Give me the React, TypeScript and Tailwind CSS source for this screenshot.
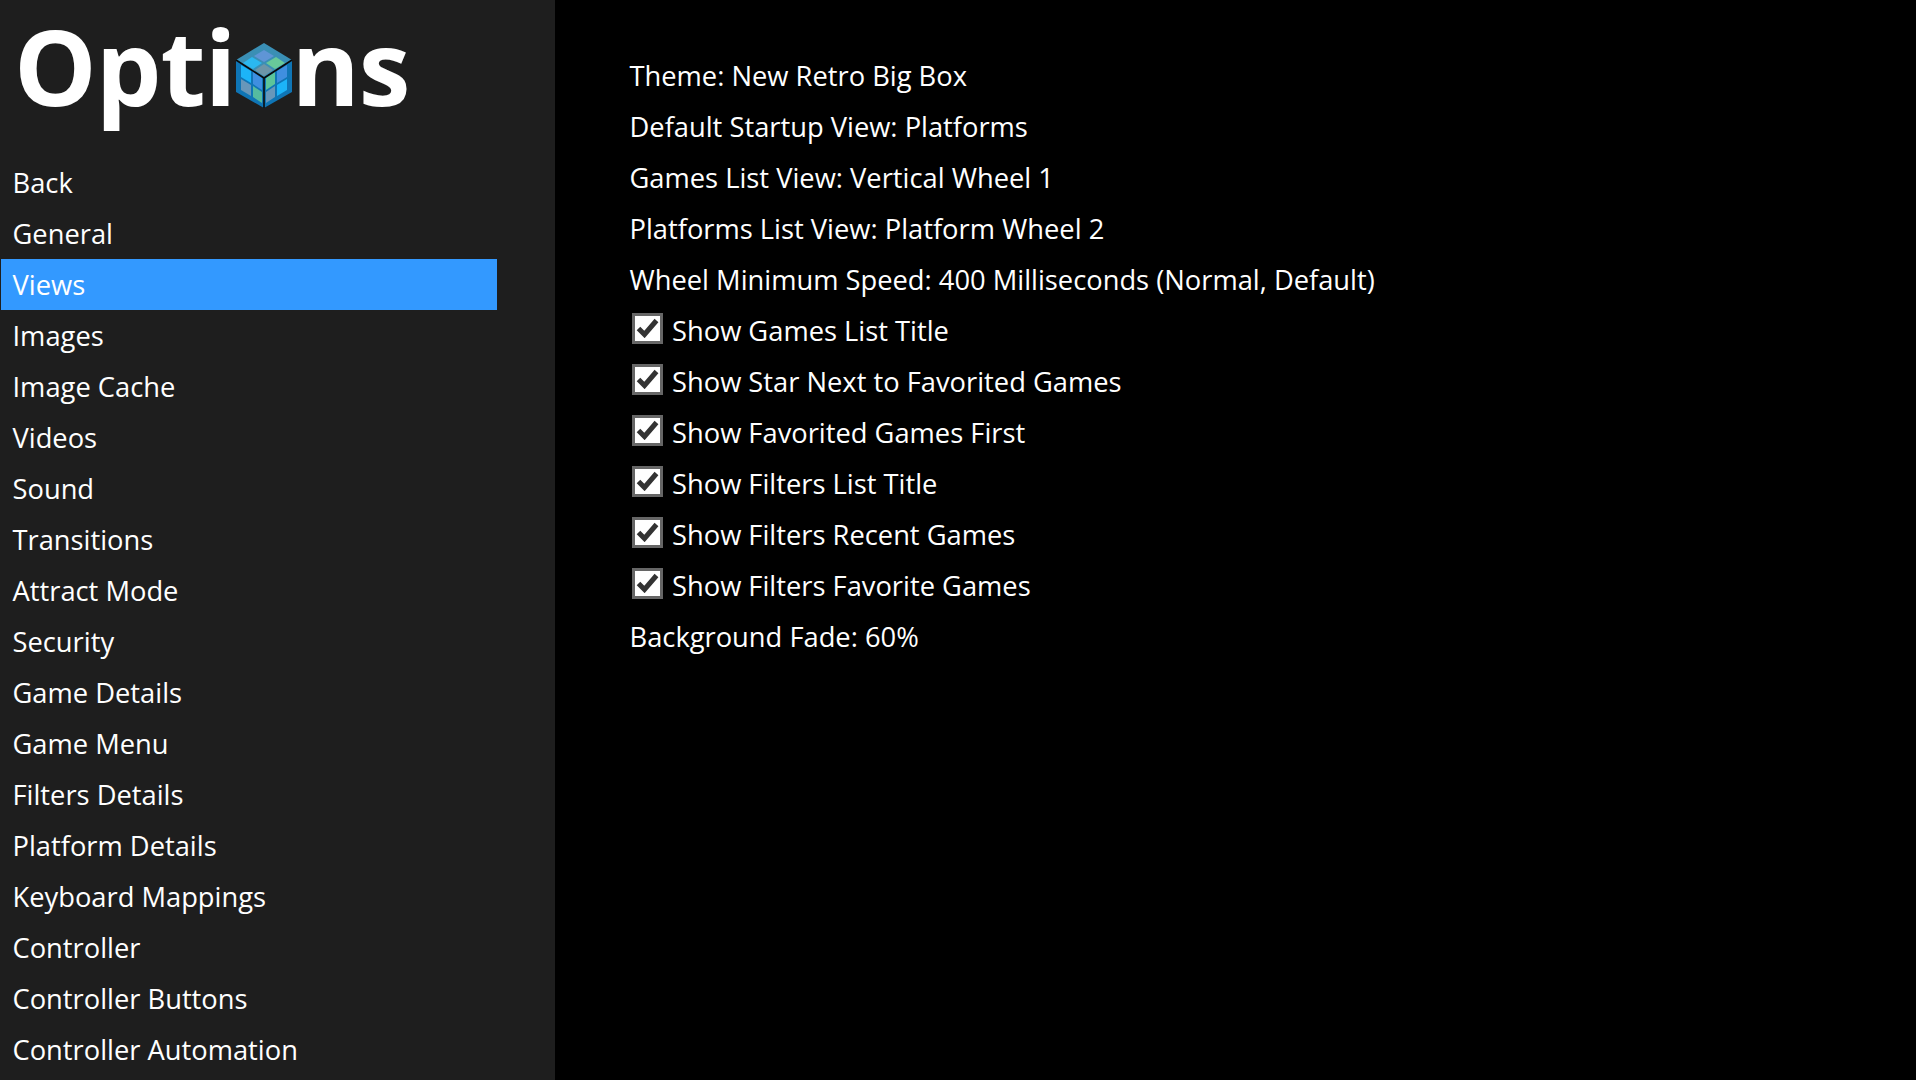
const nav = ["Back","General","Views","Images","Image Cache","Videos","Sound","Transitions","Attract Mode","Security","Game Details","Game Menu","Filters Details","Platform Details","Keyboard Mappings","Controller","Controller Buttons","Controller Automation"];

type Row = { t: string; c?: boolean };
const rows: Row[] = [
  { t: "Theme: New Retro Big Box" },
  { t: "Default Startup View: Platforms" },
  { t: "Games List View: Vertical Wheel 1" },
  { t: "Platforms List View: Platform Wheel 2" },
  { t: "Wheel Minimum Speed: 400 Milliseconds (Normal, Default)" },
  { t: "Show Games List Title", c: true },
  { t: "Show Star Next to Favorited Games", c: true },
  { t: "Show Favorited Games First", c: true },
  { t: "Show Filters List Title", c: true },
  { t: "Show Filters Recent Games", c: true },
  { t: "Show Filters Favorite Games", c: true },
  { t: "Background Fade: 60%" },
];

function Cube() {
  return (
    <svg width="58" height="66" viewBox="0 0 58 66" className="absolute left-[235px] top-[43px]">
      <polygon points="29,0 57,17 29,35 1,17" fill="#3a8fb5" />
      <polygon points="1,17 29,35 29,65 1,49" fill="#0f75b5" />
      <polygon points="57,17 29,35 29,65 57,49" fill="#0f75b5" />
      <polygon points="29,7 39,13 29,19 19,13" fill="#5f95d6" />
      <polygon points="17,14 27,20 18,26 8,20" fill="#2bb8f0" />
      <polygon points="41,14 50,20 40,26 31,20" fill="#68c99a" />
      <polygon points="29,21 38,27 29,33 20,27" fill="#6d95a8" />
      <polygon points="6,22 16,28 16,40 6,34" fill="#1cb4f8" />
      <polygon points="18,29 27,35 27,47 18,41" fill="#3f8fe0" />
      <polygon points="6,36 16,42 16,53 6,47" fill="#6797ba" />
      <polygon points="18,43 27,49 27,60 18,54" fill="#55bba0" />
      <polygon points="31,35 40,29 40,41 31,47" fill="#5cc49a" />
      <polygon points="42,28 52,22 52,34 42,40" fill="#3f8fe0" />
      <polygon points="31,49 40,43 40,54 31,60" fill="#6797ba" />
      <polygon points="42,42 52,36 52,47 42,53" fill="#1cb4f8" />
      <path d="M1 17 L29 35 L57 17 M29 35 V65" fill="none" stroke="#0a0a0a" strokeWidth="1.6" />
    </svg>
  );
}

export default function App() {
  return (
    <div className="flex h-[1080px] w-[1916px] overflow-hidden bg-black text-white font-['Open_Sans','Noto_Sans',sans-serif]">
      <aside className="relative flex w-[555px] shrink-0 flex-col bg-[#1e1e1e] pl-px">
        <h1 className="h-[157px] pl-[13px] text-[104px] leading-[132px] font-bold tracking-[-1px]">Opti<span className="inline-block w-[56px]"></span>ns</h1>
        <Cube />
        {nav.map((n) => (
          <div key={n} className={`flex h-[51px] w-[496px] shrink-0 items-center pb-px pl-[11.5px] pt-[2px] text-[27.3px] ${n === "Views" ? "bg-[#3399ff]" : ""}`}>{n}</div>
        ))}
      </aside>
      <main className="flex flex-col pl-[74.5px] pt-[51px]">
        {rows.map((r) => (
          <div key={r.t} className="flex h-[51px] items-center pb-px text-[27.3px]">
            {r.c && (
              <span className="mr-[9px] mb-[6px] ml-[2.5px] flex h-[31px] w-[31px] items-center justify-center border-[3px] border-[#666666] bg-white">
                <svg width="23" height="20" viewBox="0 0 23 20"><path d="M2.5 10.5 L8.5 16.5 L20.5 2.5" fill="none" stroke="#333333" strokeWidth="5" /></svg>
              </span>
            )}
            {r.t}
          </div>
        ))}
      </main>
    </div>
  );
}
